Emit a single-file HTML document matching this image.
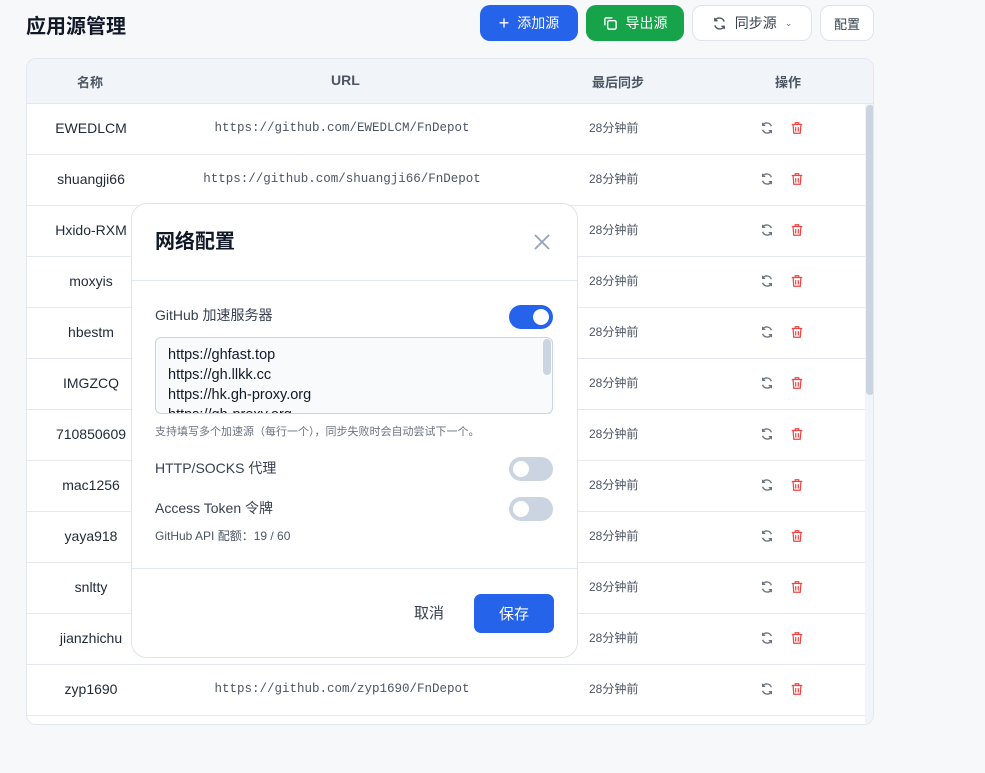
<!DOCTYPE html>
<html><head><meta charset="utf-8"><style>
*{box-sizing:border-box;margin:0;padding:0}
body{width:985px;height:773px;background:#f7f8fa;font-family:"Liberation Sans","Noto Sans CJK SC",sans-serif;position:relative;overflow:hidden;color:#1f2937}
.a{position:absolute}
.btn{position:absolute;top:5px;height:36px;border-radius:10px;font-size:14px;display:flex;align-items:center;justify-content:center;gap:8px}
.tbl{left:26px;top:58px;width:848px;height:667px;background:#fff;border:1px solid #e2e8f0;border-radius:10px;overflow:hidden}
.hd{position:absolute;left:0;top:0;width:848px;height:45px;background:#f1f4f8;border-bottom:1px solid #e2e8f0;font-size:13px;font-weight:bold;color:#4b5563}
.row{position:absolute;left:0;width:838px;height:51px;border-bottom:1px solid #e5e9ef;font-size:14px}
.row span{position:absolute;top:16px}
.nm{width:128px;text-align:center;left:0;color:#1f2937}
.url{left:128px;width:374px;text-align:center;font-family:"Liberation Mono",monospace;font-size:12.5px;color:#4b5563;top:17px!important}
.tm{left:562px;font-size:12px;color:#4b5563;top:15px!important}
.ic{top:17px!important}
.modal{left:131px;top:203px;width:447px;height:455px;background:#fff;border:1px solid #dfe4ea;border-radius:16px}
.tg{position:absolute;width:44px;height:24px;border-radius:12px;background:#cbd5e1}
.tg::after{content:"";position:absolute;top:4px;left:4px;width:16px;height:16px;border-radius:50%;background:#fff}
.tg.on{background:#2563eb}.tg.on::after{left:24px}
</style></head><body>
<div class="a" style="left:26px;top:10px;font-size:20px;font-weight:bold;color:#111827">应用源管理</div>
<div class="btn" style="left:480px;width:98px;background:#2563eb;color:#fff"><span style="font-size:18px;font-weight:300">+</span>添加源</div>
<div class="btn" style="left:586px;width:98px;background:#16a34a;color:#fff"><svg width="15" height="15" viewBox="0 0 16 16" fill="none" stroke="#fff" stroke-width="1.5"><rect x="5" y="5" width="9" height="9" rx="1.5"/><path d="M2 10V3.5A1.5 1.5 0 0 1 3.5 2H10"/></svg>导出源</div>
<div class="btn" style="left:692px;width:120px;background:#fff;border:1px solid #dfe4ea;color:#374151"><svg width="15" height="15" viewBox="0 0 16 16" fill="none" stroke="#4b5563" stroke-width="1.5"><path d="M13 6A5.5 5.5 0 0 0 3 5M3 2v3h3M3 10a5.5 5.5 0 0 0 10 1M13 14v-3h-3"/></svg>同步源<span style="font-size:9px;color:#6b7280">⌄</span></div>
<div class="btn" style="left:820px;width:54px;background:#fff;border:1px solid #dfe4ea;color:#374151;font-size:13px">配置</div>
<div class="a tbl">
<div class="hd"><span class="a" style="left:50px;top:13px">名称</span><span class="a" style="left:304px;top:13px;font-size:14px">URL</span><span class="a" style="left:565px;top:13px">最后同步</span><span class="a" style="left:748px;top:13px">操作</span></div>
<div class="a" style="left:838px;top:45px;width:10px;height:622px;background:#f1f4f8"></div>
<div class="a" style="left:839px;top:46px;width:8px;height:290px;background:#cbd5e1;border-radius:4px"></div>
<div id="rows"></div>
</div>
<script>
var n=["EWEDLCM","shuangji66","Hxido-RXM","moxyis","hbestm","IMGZCQ","710850609","mac1256","yaya918","snltty","jianzhichu","zyp1690",""];
var h="";
n.forEach(function(x,i){h+='<div class="row" style="top:'+(45+i*51)+'px"><span class="nm">'+x+'</span><span class="url">'+(x?'https://github.com/'+x+'/FnDepot':'')+'</span><span class="tm">'+(x?'28分钟前':'')+'</span>'+(x?'<span class="ic" style="left:733px"><svg width="14" height="14" viewBox="0 0 16 16" fill="none" stroke="#6b7280" stroke-width="1.5"><path d="M13 6A5.5 5.5 0 0 0 3 5M3 2v3h3M3 10a5.5 5.5 0 0 0 10 1M13 14v-3h-3"/></svg></span><span class="ic" style="left:763px"><svg width="14" height="14" viewBox="0 0 16 16" fill="none" stroke="#ef4444" stroke-width="1.4"><path d="M2 4h12M6 4V2h4v2M3.5 4l.8 10h7.4l.8-10M6.5 7v5M9.5 7v5"/></svg></span>':'')+'</div>';});
document.getElementById("rows").innerHTML=h;
</script>
<div class="a modal">
<div class="a" style="left:23px;top:21px;font-size:20px;font-weight:bold;color:#111827">网络配置</div>
<svg class="a" style="left:401px;top:29px" width="18" height="18" viewBox="0 0 18 18" stroke="#94a3b8" stroke-width="1.8"><path d="M2 2l14 14M16 2L2 16"/></svg>
<div class="a" style="left:0;top:76px;width:445px;height:1px;background:#e2e8f0"></div>
<div class="a" style="left:23px;top:101px;font-size:14px;color:#374151">GitHub 加速服务器</div>
<div class="tg on" style="left:377px;top:101px"></div>
<div class="a" style="left:23px;top:133px;width:398px;height:77px;border:1px solid #cbd5e1;border-radius:6px;background:#f8fafc;overflow:hidden;padding:7px 12px;font-size:14.5px;line-height:20px;color:#111827">https://ghfast.top<br>https://gh.llkk.cc<br>https://hk.gh-proxy.org<br>https://gh-proxy.org
<div class="a" style="right:1px;top:1px;width:8px;height:36px;background:#cbd5e1;border-radius:4px"></div></div>
<div class="a" style="left:23px;top:219px;font-size:11px;color:#6b7280">支持填写多个加速源（每行一个），同步失败时会自动尝试下一个。</div>
<div class="a" style="left:23px;top:254px;font-size:14px;color:#374151">HTTP/SOCKS 代理</div>
<div class="tg" style="left:377px;top:253px"></div>
<div class="a" style="left:23px;top:294px;font-size:14px;color:#374151">Access Token 令牌</div>
<div class="tg" style="left:377px;top:293px"></div>
<div class="a" style="left:23px;top:323px;font-size:12px;color:#4b5563">GitHub API 配额：19 / 60</div>
<div class="a" style="left:0;top:364px;width:445px;height:1px;background:#e2e8f0"></div>
<div class="a" style="left:282px;top:398px;font-size:15px;color:#374151">取消</div>
<div class="a" style="left:342px;top:390px;width:80px;height:39px;background:#2563eb;border-radius:7px;color:#fff;font-size:15px;display:flex;align-items:center;justify-content:center">保存</div>
</div>
</body></html>
